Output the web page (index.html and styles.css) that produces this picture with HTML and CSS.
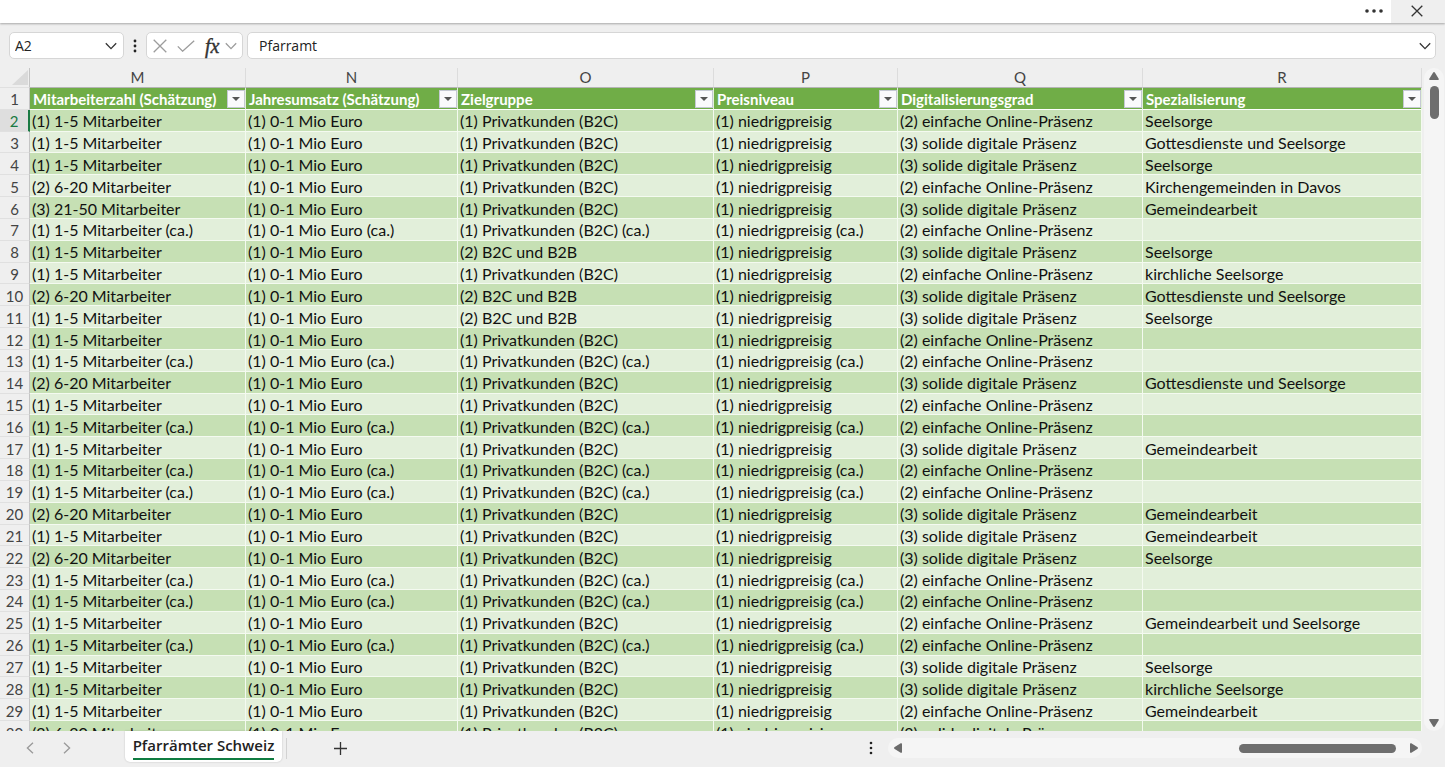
FILE: index.html
```html
<!DOCTYPE html>
<html lang="de">
<head>
  <meta charset="UTF-8" />
  <meta name="viewport" content="width=device-width, initial-scale=1.0" />
  <title>Pfarrämter Schweiz</title>
  <link rel="stylesheet" href="styles.css">
</head>
<body>
  <header class="topbar">
    <button type="button" class="more" aria-label="Mehr">
      <svg width="18" height="4" viewBox="0 0 18 4"><circle cx="2" cy="2" r="1.8"/><circle cx="9" cy="2" r="1.8"/><circle cx="16" cy="2" r="1.8"/></svg>
    </button>
    <button type="button" class="close" aria-label="Schließen">
      <svg class="line" width="12" height="12" viewBox="0 0 12 12"><path d="M.7.7l10.6 10.6M11.3.7L.7 11.3"/></svg>
    </button>
  </header>

  <div class="formula-bar">
    <div class="box name-box">
      <input type="text" value="A2" aria-label="Namenfeld" />
      <button type="button" aria-label="Namen anzeigen">
        <svg class="line" width="12" height="8" viewBox="0 0 12 8"><path d="M.8 1.2L6 6.6l5.2-5.4"/></svg>
      </button>
    </div>
    <svg class="dots" width="4" height="14" viewBox="0 0 4 14"><circle cx="2" cy="2" r="1.4"/><circle cx="2" cy="7" r="1.4"/><circle cx="2" cy="12" r="1.4"/></svg>
    <div class="box fx-box">
      <button type="button" class="muted" aria-label="Abbrechen">
        <svg class="line" width="14" height="14" viewBox="0 0 14 14"><path d="M.7.7l12.6 12.6M13.3.7L.7 13.3"/></svg>
      </button>
      <button type="button" class="muted" aria-label="Eingeben">
        <svg class="line" width="18" height="12" viewBox="0 0 18 12"><path d="M.8 6.4l4.8 4.8L17.2.8"/></svg>
      </button>
      <button type="button" class="fx" aria-label="Funktion einfügen">fx</button>
      <button type="button" class="muted" aria-label="Weitere Funktionen">
        <svg class="line" width="12" height="8" viewBox="0 0 12 8"><path d="M.8 1.2L6 6.6l5.2-5.4"/></svg>
      </button>
    </div>
    <div class="box formula">
      <input type="text" value="Pfarramt" aria-label="Bearbeitungsleiste" />
      <button type="button" aria-label="Leiste erweitern">
        <svg class="line" width="12" height="8" viewBox="0 0 12 8"><path d="M.8 1.2L6 6.6l5.2-5.4"/></svg>
      </button>
    </div>
  </div>

  <main class="sheet">
    <div class="grid">
      <table>
        <colgroup>
          <col class="col-num"><col class="col-m"><col class="col-n"><col class="col-o"><col class="col-p"><col class="col-q"><col>
        </colgroup>
        <thead>
          <tr class="letters">
            <th class="corner"><svg width="16" height="15" viewBox="0 0 16 15"><path d="M16 0v15H0z"/></svg></th>
            <th>M</th><th>N</th><th>O</th><th>P</th><th>Q</th><th>R</th>
          </tr>
        </thead>
        <tbody id="rows"></tbody>
      </table>
    </div>
    <div class="vscroll">
      <svg width="10" height="8" viewBox="0 0 10 8"><path d="M5 0q.6 0 1 .7l3.7 6q.5 1.3-.7 1.3H1Q-.2 8 .3 6.7l3.7-6Q4.400 0 5 0z"/></svg>
      <div class="thumb"></div>
      <svg class="end" width="10" height="8" viewBox="0 0 10 8"><path d="M5 8q.6 0 1-.7l3.700-6Q10.200 0 9 0H1Q-.2 0 .3 1.300l3.700 6q.4.7 1 .7z"/></svg>
    </div>
  </main>

  <footer class="tabs">
    <button type="button" class="nav" aria-label="Vorheriges Blatt">
      <svg class="line" width="8" height="12" viewBox="0 0 8 12"><path d="M7 .8L1.400 6 7 11.200"/></svg>
    </button>
    <button type="button" class="nav next" aria-label="Nächstes Blatt">
      <svg class="line" width="8" height="12" viewBox="0 0 8 12"><path d="M1 .8L6.600 6 1 11.200"/></svg>
    </button>
    <button type="button" class="tab"><span>Pfarrämter Schweiz</span></button>
    <button type="button" class="add" aria-label="Neues Blatt">
      <svg class="line" width="13" height="13" viewBox="0 0 13 13"><path d="M6.500 0v13M0 6.500h13"/></svg>
    </button>
    <svg class="dots" width="4" height="14" viewBox="0 0 4 14"><circle cx="2" cy="2" r="1.300"/><circle cx="2" cy="7" r="1.300"/><circle cx="2" cy="12" r="1.300"/></svg>
    <div class="hscroll">
      <svg width="8" height="10" viewBox="0 0 8 10"><path d="M0 5q0-.6.7-1l6-3.700Q8-.2 8 1v8q0 1.200-1.300.7l-6-3.700Q0 5.600 0 5z"/></svg>
      <div class="thumb"></div>
      <svg width="8" height="10" viewBox="0 0 8 10"><path d="M8 5q0-.6-.7-1l-6-3.700Q0-.2 0 1v8q0 1.200 1.300.7l6-3.700Q8 5.600 8 5z"/></svg>
    </div>
  </footer>

  <script>
    const headings = ["Mitarbeiterzahl (Schätzung)", "Jahresumsatz (Schätzung)", "Zielgruppe", "Preisniveau", "Digitalisierungsgrad", "Spezialisierung"];
    const staff = { 1: "(1) 1-5 Mitarbeiter", 2: "(2) 6-20 Mitarbeiter", 3: "(3) 21-50 Mitarbeiter" };
    const target = { 1: "(1) Privatkunden (B2C)", 2: "(2) B2C und B2B" };
    const digital = { 2: "(2) einfache Online-Präsenz", 3: "(3) solide digitale Präsenz" };

    // Mitarbeiter, Zielgruppe, Digitalisierung, Spezialisierung; null = nur geschätzt (ca.)
    const data = [
      [1, 1, 2, "Seelsorge"],
      [1, 1, 3, "Gottesdienste und Seelsorge"],
      [1, 1, 3, "Seelsorge"],
      [2, 1, 2, "Kirchengemeinden in Davos"],
      [3, 1, 3, "Gemeindearbeit"],
      null,
      [1, 2, 3, "Seelsorge"],
      [1, 1, 2, "kirchliche Seelsorge"],
      [2, 2, 3, "Gottesdienste und Seelsorge"],
      [1, 2, 3, "Seelsorge"],
      [1, 1, 2, ""],
      null,
      [2, 1, 3, "Gottesdienste und Seelsorge"],
      [1, 1, 2, ""],
      null,
      [1, 1, 3, "Gemeindearbeit"],
      null,
      null,
      [2, 1, 3, "Gemeindearbeit"],
      [1, 1, 3, "Gemeindearbeit"],
      [2, 1, 3, "Seelsorge"],
      null,
      null,
      [1, 1, 2, "Gemeindearbeit und Seelsorge"],
      null,
      [1, 1, 3, "Seelsorge"],
      [1, 1, 3, "kirchliche Seelsorge"],
      [1, 1, 2, "Gemeindearbeit"],
      [2, 1, 3, ""]
    ];

    const arrow = '<svg width="8" height="4" viewBox="0 0 8 4"><path d="M0 0h8L4 4z"/></svg>';
    let html = '<tr class="head"><th>1</th>' + headings.map(h =>
      `<th><div><span>${h}</span><button type="button" aria-label="${h} filtern">${arrow}</button></div></th>`).join("") + "</tr>";

    data.forEach((row, i) => {
      const [m, o, q, text] = row || [1, 1, 2, ""];
      const ca = row ? "" : " (ca.)";
      const cells = [staff[m] + ca, "(1) 0-1 Mio Euro" + ca, target[o] + ca, "(1) niedrigpreisig" + ca, digital[q], text];
      html += `<tr${i === 0 ? ' class="active"' : ""}><th>${i + 2}</th>` + cells.map(c => `<td>${c}</td>`).join("") + "</tr>";
    });
    document.getElementById("rows").innerHTML = html;
  </script>
</body>
</html>
```
FILE: styles.css
```css
* {
  box-sizing: border-box;
}
body {
  margin: 0;
  height: 100vh;
  display: flex;
  flex-direction: column;
  overflow: hidden;
  background: #efefef;
  color: #222;
  font-family: "Open Sans", "Noto Sans", sans-serif;
  font-size: 14px;
}
button {
  display: flex;
  align-items: center;
  justify-content: center;
  padding: 0;
  border: none;
  background: none;
  color: #333;
  font: inherit;
}
input {
  flex: 1;
  min-width: 0;
  padding: 0;
  border: none;
  outline: none;
  background: none;
  color: #222;
  font: inherit;
}
svg {
  display: block;
  flex: none;
  fill: currentColor;
}
.line {
  fill: none;
  stroke: currentColor;
  stroke-width: 1.3;
}

/* top bar */
.topbar {
  display: flex;
  justify-content: flex-end;
  height: 23px;
  flex: none;
  background: #fff;
  box-shadow: 0 1px 2px rgba(0, 0, 0, 0.3);
}
.topbar button {
  padding-bottom: 1px;
}
.more {
  width: 34px;
}
.close {
  width: 54px;
  padding-right: 2px;
  background: #efefef;
}

/* formula bar */
.formula-bar {
  display: flex;
  align-items: center;
  flex: none;
  height: 45px;
  padding: 0 9px;
}
.box {
  display: flex;
  align-items: center;
  height: 27px;
  border: 1px solid #d6d6d6;
  border-radius: 5px;
  background: #fff;
}
.name-box {
  width: 115px;
  padding: 0 6px 0 5px;
}
.formula-bar .dots {
  margin: 0 9px;
}
.fx-box {
  width: 97px;
  gap: 10px;
  padding-left: 6px;
}
.fx {
  font: italic 20px "Liberation Serif", serif;
  line-height: 20px;
  -webkit-text-stroke: 0.4px #333;
}
.fx + .muted {
  margin-left: -4px;
}
.muted {
  color: #9c9c9c;
}
.formula {
  flex: 1;
  margin-left: 4px;
  padding: 0 4px 0 11px;
}

/* sheet */
.sheet {
  display: flex;
  flex: 1;
  min-height: 0;
}
.grid {
  flex: 1;
  overflow: hidden;
}
table {
  width: 100%;
  height: 675px;
  table-layout: fixed;
  border-collapse: separate;
  border-spacing: 0;
  font-family: Lato, sans-serif;
  font-size: 15px;
  line-height: 20px;
  color: #111;
}
.col-num {
  width: 30px;
}
.col-m {
  width: 216px;
}
.col-n {
  width: 212px;
}
.col-o {
  width: 256px;
}
.col-p {
  width: 184px;
}
.col-q {
  width: 245px;
}
th,
td {
  padding: 0;
  white-space: nowrap;
}
tbody th,
td {
  padding-top: 2px;
  line-height: 18px;
}
td {
  padding-left: 2px;
  border-right: 1px solid #f4faf0;
  border-bottom: 1px solid #f4faf0;
  background: #e2efda;
  font-size: 16px;
}
tr:nth-child(even) td {
  background: #c6e0b4;
}
tr th:first-child {
  border-right: 1px solid #c4c4c4;
  border-bottom: 1px solid #e0e0e0;
  color: #444;
  font-weight: normal;
}
.letters {
  height: 20px;
}
.letters th {
  border-right: 1px solid #dcdcdc;
  border-bottom: 1px solid #b5b5b5;
  color: #444;
  font-weight: normal;
  line-height: 19px;
}
.letters .corner svg {
  margin-left: 12px;
  color: #dadada;
}
.head th {
  border-right: 1px solid #e2efda;
  border-bottom: 1px solid #fff;
  background: #70ad47;
  color: #fff;
  text-align: left;
}
.head th:first-child {
  background: none;
  text-align: center;
}
.head div {
  display: flex;
  align-items: center;
  justify-content: space-between;
  padding-left: 3px;
}
.head button {
  width: 18px;
  height: 18px;
  border: 1px solid #c5c9d3;
  background: #fafafc;
  color: #555;
}
tr.active th:first-child {
  border-right: 2px solid #1a7a43;
  background: #dedede;
  color: #1a7a43;
}

/* scroll bars */
.vscroll,
.hscroll {
  display: flex;
  align-items: center;
  border-radius: 10px;
  background: #f5f5f5;
  color: #6b6b6b;
}
.vscroll {
  flex-direction: column;
  width: 20px;
  margin: 0 1px 0 2px;
  padding: 4px 0;
}
.thumb {
  border-radius: 5px;
  background: #6e6e6e;
}
.vscroll .thumb {
  width: 9px;
  height: 33px;
  margin-top: 6px;
}
.vscroll .end {
  margin-top: auto;
}

/* sheet tabs */
.tabs {
  display: flex;
  align-items: center;
  flex: none;
  height: 36px;
  padding: 0 23px 2px 26px;
}
.nav {
  color: #999;
}
.next {
  margin-left: 29px;
}
.tab {
  align-self: flex-start;
  width: 157px;
  height: 31px;
  margin-left: 54px;
  border-radius: 0 0 5px 5px;
  background: #fff;
  box-shadow: 0 0 2px rgba(0, 0, 0, 0.2);
  color: #222;
  font-size: 15px;
  font-weight: 600;
  line-height: 25px;
}
.tab span {
  border-bottom: 2px solid #107c41;
}
.add {
  height: 21px;
  margin-left: 4px;
  padding-left: 47px;
  border-left: 1px solid #d2d2d2;
}
.tabs .dots {
  margin-left: auto;
  margin-right: 15px;
}
.hscroll {
  width: 534px;
  height: 20px;
  padding: 0 4px 0 6px;
}
.hscroll .thumb {
  width: 157px;
  height: 9px;
  margin-left: auto;
  margin-right: 14px;
}
```
